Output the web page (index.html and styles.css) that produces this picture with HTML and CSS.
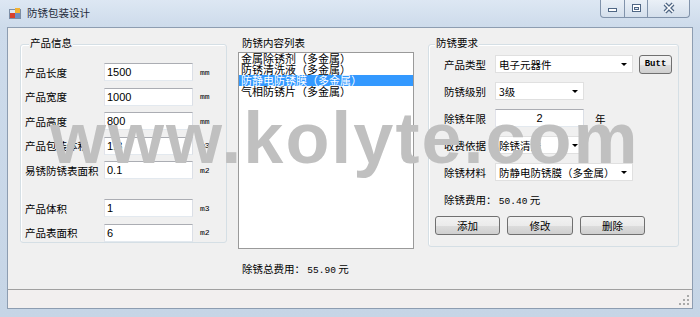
FILE: index.html
```html
<!DOCTYPE html>
<html lang="zh-CN">
<head>
  <meta charset="UTF-8">
  <title>防锈包装设计</title>
  <link rel="stylesheet" href="styles.css">
</head>
<body>

<div class="window">
  <!-- barra de título -->
  <div class="titlebar">
    <svg class="app-icon" width="12" height="12" viewBox="0 0 12 12">
      <rect x="0.5" y="2.5" width="11" height="9" fill="#dfe8f3" stroke="#7d8ea6"/>
      <rect x="1" y="6" width="5" height="5" fill="#d9412b"/>
      <rect x="6" y="1" width="5" height="5" fill="#f2b233"/>
      <rect x="6" y="6" width="5" height="5" fill="#6d8fc4"/>
    </svg>
    <span class="title">防锈包装设计</span>
    <div class="caption">
      <span class="cap-btn cap-min">
        <svg width="23" height="17" viewBox="0 0 23 17"><rect x="7.5" y="8.5" width="8" height="3" fill="#fff" stroke="#4f6684"/></svg>
      </span>
      <span class="cap-btn cap-max">
        <svg width="23" height="17" viewBox="0 0 23 17"><rect x="7.5" y="4.5" width="8" height="7" fill="#fff" stroke="#4f6684"/><rect x="9.5" y="7.5" width="4" height="2" fill="#dfe8f3" stroke="#4f6684"/></svg>
      </span>
      <span class="cap-btn cap-close">
        <svg width="42" height="17" viewBox="0 0 42 17"><path d="M17 4 L25 12 M25 4 L17 12" stroke="#4f6684" stroke-width="4"/><path d="M17 4 L25 12 M25 4 L17 12" stroke="#fff" stroke-width="1.6"/></svg>
      </span>
    </div>
  </div>

  <div class="client">
    <div class="panels">

      <!-- 产品信息 -->
      <div class="group group-product">
        <div class="group-title">产品信息</div>
        <div class="field-row first">
          <label>产品长度</label><div class="textbox">1500</div><span class="unit">mm</span>
        </div>
        <div class="field-row">
          <label>产品宽度</label><div class="textbox">1000</div><span class="unit">mm</span>
        </div>
        <div class="field-row">
          <label>产品高度</label><div class="textbox">800</div><span class="unit">mm</span>
        </div>
        <div class="field-row">
          <label>产品包装体积</label><div class="textbox">1.3</div><span class="unit">m3</span>
        </div>
        <div class="field-row">
          <label>易锈防锈表面积</label><div class="textbox">0.1</div><span class="unit">m2</span>
        </div>
        <div class="field-row spaced">
          <label>产品体积</label><div class="textbox">1</div><span class="unit">m3</span>
        </div>
        <div class="field-row">
          <label>产品表面积</label><div class="textbox">6</div><span class="unit">m2</span>
        </div>
      </div>

      <!-- 防锈内容列表 -->
      <div class="list-col">
        <div class="col-title">防锈内容列表</div>
        <ul class="listbox">
          <li>金属除锈剂（多金属）</li>
          <li>防锈清洗液（多金属）</li>
          <li class="selected">防静电防锈膜（多金属）</li>
          <li>气相防锈片（多金属）</li>
        </ul>
        <div class="total">除锈总费用： <span class="num">55.90</span> 元</div>
      </div>

      <!-- 防锈要求 -->
      <div class="group group-req">
        <div class="group-title">防锈要求</div>
        <div class="req-row first">
          <label>产品类型</label>
          <div class="combo wide">电子元器件<span class="arrow"></span></div>
          <button class="btn btn-small">Butt</button>
        </div>
        <div class="req-row">
          <label>防锈级别</label>
          <div class="combo">3级<span class="arrow"></span></div>
        </div>
        <div class="req-row">
          <label>除锈年限</label>
          <div class="textbox center">2</div>
          <span class="suffix">年</span>
        </div>
        <div class="req-row">
          <label>收费依据</label>
          <div class="combo">除锈清洗<span class="arrow"></span></div>
        </div>
        <div class="req-row">
          <label>除锈材料</label>
          <div class="combo wide">防静电防锈膜（多金属）<span class="arrow"></span></div>
        </div>
        <div class="req-row">
          <span class="cost">除锈费用： <span class="num">50.40</span> 元</span>
        </div>
        <div class="btn-row">
          <button class="btn">添加</button>
          <button class="btn">修改</button>
          <button class="btn">删除</button>
        </div>
      </div>

    </div>

    <div class="statusbar">
      <svg class="grip" width="11" height="11" viewBox="0 0 11 11">
        <g fill="#a9a9a9">
          <rect x="8" y="0" width="2" height="2"/>
          <rect x="4" y="4" width="2" height="2"/><rect x="8" y="4" width="2" height="2"/>
          <rect x="0" y="8" width="2" height="2"/><rect x="4" y="8" width="2" height="2"/><rect x="8" y="8" width="2" height="2"/>
        </g>
      </svg>
    </div>
  </div>

  <div class="watermark">www.kolyte.com</div>
</div>

</body>
</html>
```

FILE: styles.css
```css
/* página */
body {
  margin: 0;
  width: 700px;
  height: 317px;
  overflow: hidden;
  font-family: "Noto Sans CJK SC", sans-serif;
  font-size: 10.5px;
  color: #000;
}

/* janela */
.window {
  position: relative;
  width: 700px;
  height: 317px;
  box-sizing: border-box;
  padding: 0 7px 8px 7px;
  display: flex;
  flex-direction: column;
  background: linear-gradient(#dde7f3, #cddbeb 27px, #c6d5e6);
}

.titlebar {
  height: 27px;
  display: flex;
  align-items: flex-start;
  flex-shrink: 0;
}
.app-icon {
  margin: 7px 0 0 2px;
}
.title {
  margin: 6px 0 0 6px;
  line-height: 14px;
  color: #1e2a3a;
}
.caption {
  margin-left: auto;
  margin-right: 3px;
  display: flex;
  border: 1px solid #8193ab;
  border-top: none;
  border-radius: 0 0 4px 4px;
  overflow: hidden;
  background: linear-gradient(#eaf0f7, #d4dfec);
}
.cap-btn {
  display: block;
  height: 17px;
}
.cap-btn svg { display: block; }
.cap-min, .cap-max { width: 23px; border-right: 1px solid #8193ab; }
.cap-max { width: 22px; }
.cap-close { width: 41px; }

/* área cliente */
.client {
  flex: 1;
  border: 1px solid #8d9db1;
  background: #f0f0f0;
  display: flex;
  flex-direction: column;
}
.panels {
  flex: 1;
  display: flex;
  align-items: flex-start;
  padding: 16px 0 0 12px;
}

/* caixas de grupo */
.group {
  box-sizing: border-box;
  border: 1px solid #d5dfe5;
  border-radius: 3px;
  box-shadow: inset 1px 1px 0 #fff;
}
.group-title {
  margin: -9px 0 0 4px;
  padding: 0 1px;
  width: fit-content;
  line-height: 14px;
  background: #f0f0f0;
}
.group-product {
  width: 207px;
  height: 199px;
  padding-left: 4px;
}
.group-req {
  width: 251px;
  height: 203px;
  margin-left: 14px;
  padding-left: 6px;
}
.group-req .group-title { margin-left: 0; }

/* linhas do painel esquerdo */
.field-row {
  display: flex;
  align-items: center;
  height: 18px;
  margin-top: 6.5px;
}
.field-row.first { margin-top: 13px; }
.field-row.spaced { margin-top: 20px; }
.field-row label {
  width: 79px;
  white-space: nowrap;
}
.textbox {
  box-sizing: border-box;
  width: 89px;
  height: 18px;
  padding-left: 2px;
  background: #fff;
  border: 1px solid;
  border-color: #abadb3 #dbdfe6 #e3e9ef #e2e3ea;
  font-family: "Liberation Sans", sans-serif;
  font-size: 11px;
  line-height: 16px;
}
.textbox.center { text-align: center; padding-left: 0; }
.unit {
  margin-left: 7px;
  font-family: "Liberation Mono", monospace;
  font-size: 8px;
}

/* lista central */
.list-col {
  width: 176px;
  margin: -8px 0 0 11px;
}
.col-title {
  padding-left: 4px;
  line-height: 14px;
}
.listbox {
  box-sizing: border-box;
  height: 197px;
  margin: 2px 0 0;
  padding: 0;
  list-style: none;
  background: #fff;
  border: 1px solid #9a9a9a;
  font-size: 11px;
}
.listbox li {
  height: 11px;
  line-height: 11px;
  padding-left: 2px;
  white-space: nowrap;
}
.listbox li.selected {
  background: #3399ff;
  color: #fff;
}
.total {
  margin-top: 13px;
  padding-left: 4px;
  line-height: 14px;
}
.num {
  font-family: "Liberation Mono", monospace;
  font-size: 9.5px;
}

/* linhas do painel direito */
.req-row {
  display: flex;
  align-items: center;
  height: 20px;
  margin-top: 7px;
  padding-left: 9px;
}
.req-row.first { margin-top: 4px; }
.req-row label {
  width: 51px;
  white-space: nowrap;
}
.combo {
  box-sizing: border-box;
  width: 89px;
  height: 18px;
  padding-left: 3px;
  display: flex;
  align-items: center;
  background: #fff;
  border: 1px solid #e0e0e0;
  white-space: nowrap;
  overflow: hidden;
}
.combo.wide { width: 138px; }
.arrow {
  margin-left: auto;
  margin-right: 5px;
  flex-shrink: 0;
  border-left: 3px solid transparent;
  border-right: 3px solid transparent;
  border-top: 3px solid #000;
}
.suffix { margin-left: 11px; }

/* botões */
.btn {
  box-sizing: border-box;
  width: 65px;
  height: 19px;
  padding: 0;
  border: 1px solid #707070;
  border-radius: 3px;
  background: linear-gradient(#f2f2f2, #ebebeb 50%, #dddddd 51%, #cfcfcf);
  font-family: "Noto Sans CJK SC", sans-serif;
  font-size: 10.5px;
  color: #000;
}
.btn-small {
  width: 33px;
  margin-left: 6px;
  font-family: "Liberation Mono", monospace;
  font-size: 9px;
  font-weight: bold;
}
.btn-row {
  display: flex;
  gap: 7px;
  margin-top: 7px;
}
.btn-row .btn:nth-child(2) { width: 66px; }

/* barra de status */
.statusbar {
  height: 18px;
  flex-shrink: 0;
  border-top: 1px solid #a0a0a0;
  background: #f2efef;
  display: flex;
  justify-content: flex-end;
  align-items: flex-end;
}
.grip { margin: 0 2px 2px 0; }

/* marca d'água */
.watermark {
  position: absolute;
  left: 50px;
  top: 102px;
  font-family: "Liberation Sans", sans-serif;
  font-weight: bold;
  font-size: 72px;
  line-height: 72px;
  letter-spacing: 2px;
  color: #c0c0c0;
  white-space: nowrap;
  pointer-events: none;
}
```
